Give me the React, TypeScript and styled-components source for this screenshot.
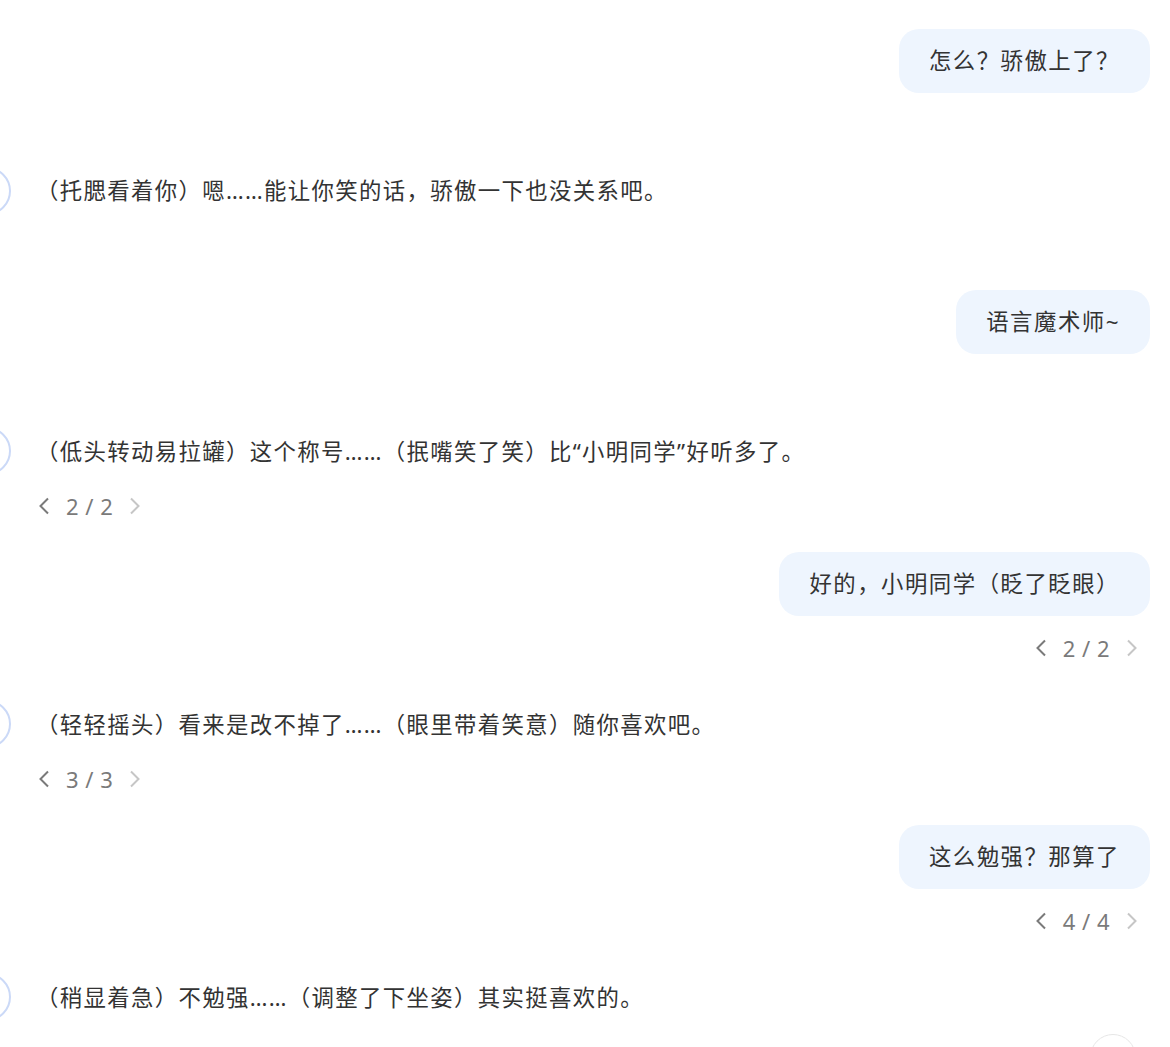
import styled, { createGlobalStyle } from 'styled-components';

// Conversation data: who spoke, what, and which version (if several)
type Message = {
    role: 'user' | 'assistant';
    text: string;
    version?: [number, number];
};

const messages: Message[] = [
    { role: 'user', text: '怎么？骄傲上了？' },
    { role: 'assistant', text: '（托腮看着你）嗯……能让你笑的话，骄傲一下也没关系吧。' },
    { role: 'user', text: '语言魔术师~' },
    {
        role: 'assistant',
        text: '（低头转动易拉罐）这个称号……（抿嘴笑了笑）比“小明同学”好听多了。',
        version: [2, 2],
    },
    { role: 'user', text: '好的，小明同学（眨了眨眼）', version: [2, 2] },
    {
        role: 'assistant',
        text: '（轻轻摇头）看来是改不掉了……（眼里带着笑意）随你喜欢吧。',
        version: [3, 3],
    },
    { role: 'user', text: '这么勉强？那算了', version: [4, 4] },
    { role: 'assistant', text: '（稍显着急）不勉强……（调整了下坐姿）其实挺喜欢的。' },
];

const GlobalStyle = createGlobalStyle`
  html, body {
    margin: 0;
    background: #fff;
    overflow: hidden;
  }
  body {
    font-family: "Noto Sans", "Noto Sans CJK SC", sans-serif;
    color: #333;
  }
`;

const Thread = styled.div`
  display: flex;
  flex-direction: column;
  gap: 29px;
  padding: 29px 20px 0 36px;
`;

const UserBlock = styled.div`
  display: flex;
  flex-direction: column;
  align-items: flex-end;
`;

const Bubble = styled.div`
  background-color: #eef5fe;
  border-radius: 20px;
  padding: 14px 30px;
  font-size: 22.4px;
  line-height: 36px;
  letter-spacing: 1.5px;
  color: #333;
`;

const UserActions = styled.div<{ $hasPager: boolean }>`
  height: ${(p) => (p.$hasPager ? 62 : 51)}px;
  box-sizing: border-box;
  padding: 16px 10px 0 0;
  display: flex;
  justify-content: flex-end;
  align-items: flex-start;
`;

const AssistantBlock = styled.div`
  display: flex;
  flex-direction: column;
`;

const AssistantRow = styled.div`
  display: flex;
  align-items: center;
  gap: 25px;
  margin-left: -73px;
`;

const Avatar = styled.div`
  flex: none;
  width: 48px;
  height: 48px;
  margin: -6.5px 0;
  box-sizing: border-box;
  border-radius: 50%;
  border: 2px solid #cbd9f7;
  background: #fff;
`;

const AssistantText = styled.div`
  font-size: 22.4px;
  line-height: 35px;
  letter-spacing: 1.35px;
  color: #333;
  white-space: nowrap;
`;

const AssistantActions = styled.div<{ $hasPager: boolean }>`
  height: ${(p) => (p.$hasPager ? 54 : 52.5)}px;
  box-sizing: border-box;
  padding-top: 21px;
  display: flex;
  align-items: flex-start;
`;

const Pager = styled.div`
  display: flex;
  align-items: center;
  gap: 14px;
  height: 32px;
`;

const PagerCount = styled.span`
  font-size: 22px;
  line-height: 32px;
  letter-spacing: 0.5px;
  color: #7a7a7a;
`;

const Chevron = styled.svg<{ $disabled?: boolean }>`
  display: block;
  color: ${(p) => (p.$disabled ? '#c6c6c6' : '#7a7a7a')};
`;

const ScrollButton = styled.div`
  position: fixed;
  top: 1034px;
  right: 34px;
  width: 46px;
  height: 46px;
  box-sizing: border-box;
  border-radius: 50%;
  border: 1px solid #e6e6e6;
  background: #fff;
`;

function VersionPager({ current, total }: { current: number; total: number }) {
    return (
        <Pager>
            <Chevron width="16" height="18" viewBox="0 0 16 18" $disabled={current <= 1}>
                <polyline points="12,1.5 4.5,9 12,16.5" fill="none" stroke="currentColor" strokeWidth="2" />
            </Chevron>
            <PagerCount>
                {current} / {total}
            </PagerCount>
            <Chevron width="16" height="18" viewBox="0 0 16 18" $disabled={current >= total}>
                <polyline points="4,1.5 11.5,9 4,16.5" fill="none" stroke="currentColor" strokeWidth="2" />
            </Chevron>
        </Pager>
    );
}

function App() {
    return (
        <>
            <GlobalStyle />
            <Thread>
                {messages.map((msg, index) =>
                    msg.role === 'user' ? (
                        <UserBlock key={index}>
                            <Bubble>{msg.text}</Bubble>
                            <UserActions $hasPager={!!msg.version}>
                                {msg.version && <VersionPager current={msg.version[0]} total={msg.version[1]} />}
                            </UserActions>
                        </UserBlock>
                    ) : (
                        <AssistantBlock key={index}>
                            <AssistantRow>
                                <Avatar />
                                <AssistantText>{msg.text}</AssistantText>
                            </AssistantRow>
                            <AssistantActions $hasPager={!!msg.version}>
                                {msg.version && <VersionPager current={msg.version[0]} total={msg.version[1]} />}
                            </AssistantActions>
                        </AssistantBlock>
                    )
                )}
            </Thread>
            <ScrollButton />
        </>
    );
}

export default App;
